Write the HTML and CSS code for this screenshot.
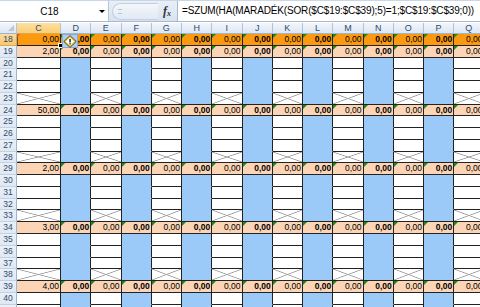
FILE: index.html
```html
<!DOCTYPE html>
<html>
<head>
<meta charset="utf-8">
<link rel="stylesheet" href="styles.css">
</head>
<body>
<div class="top"></div>
<div class="fbar">
  <div class="namebox"><span class="name">C18</span><span class="arrow"></span></div>
  <div class="mid">
    <div class="pill"><span class="grip"></span></div>
    <span class="fx">f<sub>x</sub></span>
  </div>
  <div class="formula">=SZUM(HA(MARADÉK(SOR($C$19:$C$39);5)=1;$C$19:$C$39;0))</div>
</div>
<div class="sheet">
  <div class="row hdr"><div class="corner"></div><div class="hl">C</div><div>D</div><div>E</div><div>F</div><div>G</div><div>H</div><div>I</div><div>J</div><div>K</div><div>L</div><div>M</div><div>N</div><div>O</div><div>P</div><div>Q</div></div>
  <div class="row sel"><div class="rh">18</div><div class="active">0,00</div><div>0,00</div><div>0,00</div><div>0,00</div><div>0,00</div><div>0,00</div><div>0,00</div><div>0,00</div><div>0,00</div><div>0,00</div><div>0,00</div><div>0,00</div><div>0,00</div><div>0,00</div><div>0,00</div></div>
  <div class="row sum"><div class="rh">19</div><div>2,00</div><div>0,00</div><div>0,00</div><div>0,00</div><div>0,00</div><div>0,00</div><div>0,00</div><div>0,00</div><div>0,00</div><div>0,00</div><div>0,00</div><div>0,00</div><div>0,00</div><div>0,00</div><div>0,00</div></div>
  <div class="row plain"><div class="rh">20</div><div></div><div></div><div></div><div></div><div></div><div></div><div></div><div></div><div></div><div></div><div></div><div></div><div></div><div></div><div></div></div>
  <div class="row plain"><div class="rh">21</div><div></div><div></div><div></div><div></div><div></div><div></div><div></div><div></div><div></div><div></div><div></div><div></div><div></div><div></div><div></div></div>
  <div class="row plain"><div class="rh">22</div><div></div><div></div><div></div><div></div><div></div><div></div><div></div><div></div><div></div><div></div><div></div><div></div><div></div><div></div><div></div></div>
  <div class="row x"><div class="rh">23</div><div></div><div></div><div></div><div></div><div></div><div></div><div></div><div></div><div></div><div></div><div></div><div></div><div></div><div></div><div></div></div>
  <div class="row sum"><div class="rh">24</div><div>50,00</div><div>0,00</div><div>0,00</div><div>0,00</div><div>0,00</div><div>0,00</div><div>0,00</div><div>0,00</div><div>0,00</div><div>0,00</div><div>0,00</div><div>0,00</div><div>0,00</div><div>0,00</div><div>0,00</div></div>
  <div class="row plain"><div class="rh">25</div><div></div><div></div><div></div><div></div><div></div><div></div><div></div><div></div><div></div><div></div><div></div><div></div><div></div><div></div><div></div></div>
  <div class="row plain"><div class="rh">26</div><div></div><div></div><div></div><div></div><div></div><div></div><div></div><div></div><div></div><div></div><div></div><div></div><div></div><div></div><div></div></div>
  <div class="row plain"><div class="rh">27</div><div></div><div></div><div></div><div></div><div></div><div></div><div></div><div></div><div></div><div></div><div></div><div></div><div></div><div></div><div></div></div>
  <div class="row x"><div class="rh">28</div><div></div><div></div><div></div><div></div><div></div><div></div><div></div><div></div><div></div><div></div><div></div><div></div><div></div><div></div><div></div></div>
  <div class="row sum"><div class="rh">29</div><div>2,00</div><div>0,00</div><div>0,00</div><div>0,00</div><div>0,00</div><div>0,00</div><div>0,00</div><div>0,00</div><div>0,00</div><div>0,00</div><div>0,00</div><div>0,00</div><div>0,00</div><div>0,00</div><div>0,00</div></div>
  <div class="row plain"><div class="rh">30</div><div></div><div></div><div></div><div></div><div></div><div></div><div></div><div></div><div></div><div></div><div></div><div></div><div></div><div></div><div></div></div>
  <div class="row plain"><div class="rh">31</div><div></div><div></div><div></div><div></div><div></div><div></div><div></div><div></div><div></div><div></div><div></div><div></div><div></div><div></div><div></div></div>
  <div class="row plain"><div class="rh">32</div><div></div><div></div><div></div><div></div><div></div><div></div><div></div><div></div><div></div><div></div><div></div><div></div><div></div><div></div><div></div></div>
  <div class="row x"><div class="rh">33</div><div></div><div></div><div></div><div></div><div></div><div></div><div></div><div></div><div></div><div></div><div></div><div></div><div></div><div></div><div></div></div>
  <div class="row sum"><div class="rh">34</div><div>3,00</div><div>0,00</div><div>0,00</div><div>0,00</div><div>0,00</div><div>0,00</div><div>0,00</div><div>0,00</div><div>0,00</div><div>0,00</div><div>0,00</div><div>0,00</div><div>0,00</div><div>0,00</div><div>0,00</div></div>
  <div class="row plain"><div class="rh">35</div><div></div><div></div><div></div><div></div><div></div><div></div><div></div><div></div><div></div><div></div><div></div><div></div><div></div><div></div><div></div></div>
  <div class="row plain"><div class="rh">36</div><div></div><div></div><div></div><div></div><div></div><div></div><div></div><div></div><div></div><div></div><div></div><div></div><div></div><div></div><div></div></div>
  <div class="row plain"><div class="rh">37</div><div></div><div></div><div></div><div></div><div></div><div></div><div></div><div></div><div></div><div></div><div></div><div></div><div></div><div></div><div></div></div>
  <div class="row x"><div class="rh">38</div><div></div><div></div><div></div><div></div><div></div><div></div><div></div><div></div><div></div><div></div><div></div><div></div><div></div><div></div><div></div></div>
  <div class="row sum"><div class="rh">39</div><div>4,00</div><div>0,00</div><div>0,00</div><div>0,00</div><div>0,00</div><div>0,00</div><div>0,00</div><div>0,00</div><div>0,00</div><div>0,00</div><div>0,00</div><div>0,00</div><div>0,00</div><div>0,00</div><div>0,00</div></div>
  <div class="row plain"><div class="rh">40</div><div></div><div></div><div></div><div></div><div></div><div></div><div></div><div></div><div></div><div></div><div></div><div></div><div></div><div></div><div></div></div>
  <div class="row plain"><div class="rh">41</div><div></div><div></div><div></div><div></div><div></div><div></div><div></div><div></div><div></div><div></div><div></div><div></div><div></div><div></div><div></div></div>
  <div class="smarttag">
    <svg width="14" height="13" viewBox="0 0 14 13">
      <path d="M7 0.6 L13.2 6.5 L7 12.4 L0.8 6.5 Z" fill="#f3d02a" stroke="#3a3a3a" stroke-width="0.9"/>
      <path d="M7 2.6 L11.2 6.5 L7 10.4 L2.8 6.5 Z" fill="#fff"/>
      <rect x="6.4" y="3.9" width="1.3" height="3.6" fill="#000"/>
      <rect x="6.4" y="8.2" width="1.3" height="1.2" fill="#000"/>
    </svg>
  </div>
</div>
</body>
</html>
```
FILE: styles.css
```css
html, body {
  margin: 0;
  padding: 0;
}
body {
  width: 480px;
  height: 307px;
  overflow: hidden;
  background: #fff;
  font-family: "Liberation Sans", Arial, sans-serif;
}
.top {
  height: 1px;
  background: #c9d6e6;
}
.fbar {
  display: flex;
  height: 20px;
  background: linear-gradient(#e9eff8, #d8e3f1);
  border-bottom: 1px solid #a8b9cf;
}
.namebox {
  width: 109px;
  background: #fff;
  border-right: 1px solid #b4c4d8;
  display: flex;
  align-items: center;
  box-sizing: border-box;
}
.name {
  flex: 1;
  text-align: center;
  font-size: 10px;
  color: #000;
}
.arrow {
  width: 0;
  height: 0;
  border-left: 3px solid transparent;
  border-right: 3px solid transparent;
  border-top: 3px solid #000;
  margin-right: 3px;
  margin-top: 1px;
}
.mid {
  width: 69px;
  display: flex;
  align-items: center;
  border-right: 1px solid #a8b9cf;
  box-sizing: border-box;
}
.pill {
  margin-left: 3px;
  width: 46px;
  height: 17px;
  border: 1px solid #c2cfdf;
  border-right: none;
  border-radius: 9px 0 0 9px;
  background: linear-gradient(#f4f7fb, #e2e9f3);
  box-sizing: border-box;
  display: flex;
  align-items: center;
}
.grip {
  width: 4px;
  height: 3px;
  margin-left: 5px;
  border-top: 1px solid #b6c3d4;
  border-bottom: 1px solid #b6c3d4;
}
.fx {
  margin-left: 5px;
  font-family: "Liberation Serif", "Times New Roman", serif;
  font-style: italic;
  font-weight: bold;
  font-size: 12px;
  color: #333;
  line-height: 1;
}
.fx sub {
  font-size: 8px;
  vertical-align: -1px;
}
.formula {
  flex: 1;
  background: #fff;
  font-size: 10px;
  letter-spacing: -0.15px;
  line-height: 20px;
  padding-left: 4px;
  color: #000;
  white-space: nowrap;
  overflow: hidden;
}
.sheet {
  position: relative;
  margin-top: 1px;
}
.row {
  display: grid;
  grid-template-columns: 17px 44px repeat(14, 30.25px);
  height: 11.77px;
}
.row > div {
  position: relative;
  box-sizing: border-box;
  border-right: 1px solid #222;
  border-bottom: 1px solid #222;
  font-size: 8.5px;
  line-height: 10.5px;
  text-align: right;
  padding-right: 1px;
  white-space: nowrap;
  overflow: hidden;
  color: #000;
}
.row.plain > div:nth-child(odd):not(:first-child),
.row.x > div:nth-child(odd):not(:first-child) {
  background: #9ccaf8;
}
.row.plain > div:nth-child(odd):not(:first-child) {
  border-bottom-color: #9ccaf8;
}
.row > .rh {
  background: linear-gradient(#eaf0f8, #dfe8f3);
  border-right: 1px solid #9eb6ce;
  border-bottom: 1px solid #c3d2e3;
  color: #2c4a6e;
  text-align: center;
  padding: 0;
  font-size: 8.5px;
}
.row.sel > .rh {
  background: linear-gradient(#fbdc9f, #f5c771);
  border-right-color: #e3a747;
  border-bottom-color: #e3a747;
}
.row.hdr {
  height: 11px;
}
.row.hdr > div {
  background: linear-gradient(#f3f6fb, #dde6f2);
  border-right: 1px solid #b0c3d8;
  border-bottom: 1px solid #9eb6ce;
  text-align: center;
  padding: 0;
  color: #2c4a6e;
  font-size: 9px;
  line-height: 11px;
}
.row.hdr > .hl {
  background: linear-gradient(#fddf9c, #f8cf7b);
  border-bottom-color: #e3a747;
}
.row.hdr > .corner::after {
  content: "";
  position: absolute;
  right: 2px;
  bottom: 2px;
  border-left: 6px solid transparent;
  border-bottom: 6px solid #b8c6d6;
}
.row.sum > div:not(:first-child) {
  background: #fbd5b5;
}
.row.sel > div:not(:first-child) {
  background: #fb9a10;
}
.row.sum > div:nth-child(odd):not(:first-child),
.row.sel > div:nth-child(odd):not(:first-child) {
  font-weight: bold;
}
.row.sum > div:nth-child(n+3)::before,
.row.sel > div:nth-child(n+3)::before {
  content: "";
  position: absolute;
  left: 0;
  top: 0;
  border-top: 4px solid #1a8a1a;
  border-right: 4px solid transparent;
}
.row.x > div:nth-child(even) {
  background:
    linear-gradient(to top right, transparent calc(50% - 0.8px), #9a9a9a 50%, transparent calc(50% + 0.8px)),
    linear-gradient(to bottom right, transparent calc(50% - 0.8px), #9a9a9a 50%, transparent calc(50% + 0.8px)),
    #fff;
}
.row > .active {
  box-shadow: inset 1px 0 0 #555;
  overflow: visible;
}
.row > .active::before {
  content: "";
  position: absolute;
  left: 0;
  top: 0;
  border-top: 3px solid #d6457a;
  border-right: 3px solid transparent;
}
.row > .active::after {
  content: "";
  position: absolute;
  right: -3px;
  bottom: -3px;
  width: 3px;
  height: 3px;
  background: #000;
  border: 1px solid #fff;
  z-index: 2;
}
.smarttag {
  position: absolute;
  left: 62px;
  top: 11px;
  width: 16px;
  height: 14px;
  background: #b7cbe3;
  border: 1px solid #8aa9cf;
  box-sizing: border-box;
  display: flex;
  align-items: center;
  justify-content: center;
  z-index: 3;
}
.smarttag svg {
  display: block;
}
```
